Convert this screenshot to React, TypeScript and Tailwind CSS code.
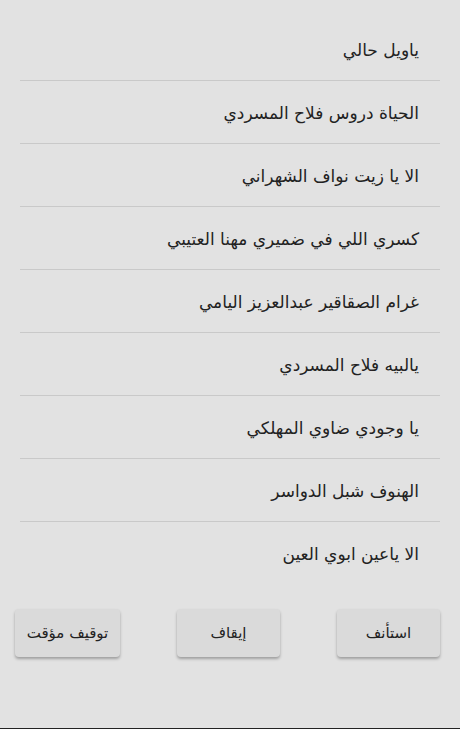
const songs = [
  "ياويل حالي",
  "الحياة دروس فلاح المسردي",
  "الا يا زيت نواف الشهراني",
  "كسري اللي في ضميري مهنا العتيبي",
  "غرام الصقاقير عبدالعزيز اليامي",
  "يالبيه فلاح المسردي",
  "يا وجودي ضاوي المهلكي",
  "الهنوف شبل الدواسر",
  "الا ياعين ابوي العين",
];

const App = () => {
  return (
    <div
      dir="rtl"
      className="h-[729px] bg-[#e2e2e2] flex flex-col border-b border-[#222] text-[#222]"
      style={{ fontFamily: '"DejaVu Sans", "Noto Sans", sans-serif' }}
    >
      <ul className="pt-[18px] pr-[20px] pl-[20px]">
        {songs.map((song, index) => (
          <li key={index}>
            <div className="h-[62px] flex items-center pt-[3px] pr-[21px] text-[17px]">
              {song}
            </div>
            {index < songs.length - 1 && <div className="h-px bg-[#c9c9c9]" />}
          </li>
        ))}
      </ul>
      <div className="flex justify-between pr-[20px] pl-[15px] mt-[25px]">
        <button className="w-[103px] h-[48px] bg-[#dadada] rounded-sm shadow-[0_2px_3px_rgba(0,0,0,0.3)] text-[15px]">
          استأنف
        </button>
        <button className="w-[103px] h-[48px] bg-[#dadada] rounded-sm shadow-[0_2px_3px_rgba(0,0,0,0.3)] text-[15px]">
          إيقاف
        </button>
        <button className="w-[105px] h-[48px] bg-[#dadada] rounded-sm shadow-[0_2px_3px_rgba(0,0,0,0.3)] text-[15px]">
          توقيف مؤقت
        </button>
      </div>
    </div>
  );
};

export default App;
